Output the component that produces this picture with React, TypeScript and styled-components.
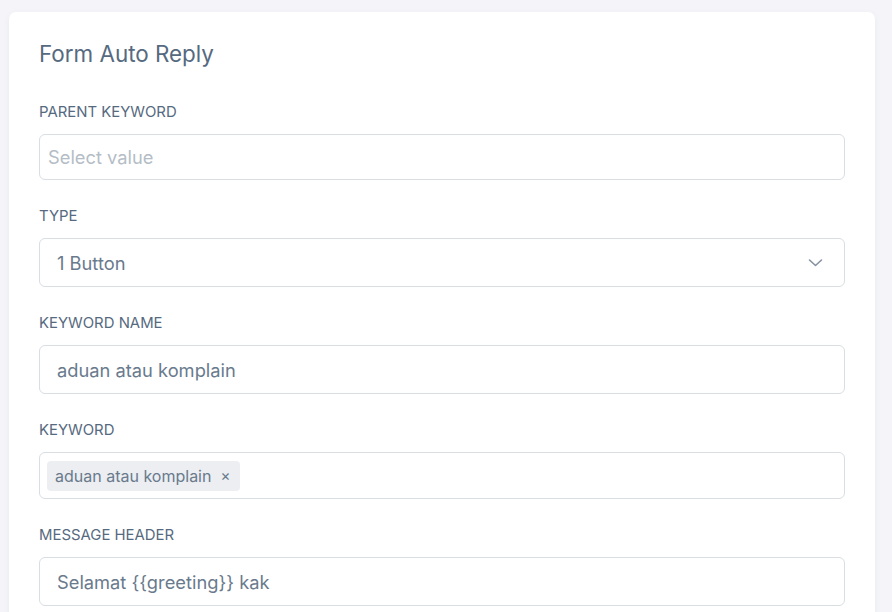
import * as React from 'react';
import styled, { createGlobalStyle } from 'styled-components';

const GlobalStyle = createGlobalStyle`
    html, body {
        margin: 0;
        padding: 0;
        background: #f5f5f9;
        font-family: Inter, "Noto Sans", "Liberation Sans", sans-serif;
        color: #566a7f;
    }
`;

const Page = styled.div`
    padding: 12px 17px 0 9px;
    height: 600px;
    overflow: hidden;
`;

const Card = styled.div`
    background: #fff;
    border-radius: 7px;
    box-shadow: 0 2px 6px rgba(67, 89, 113, 0.08);
    padding: 27px 30px 40px 30px;
    display: flex;
    flex-direction: column;
`;

const Title = styled.h5`
    margin: 0 0 33px 0;
    font-size: 22.4px;
    line-height: 30px;
    font-weight: 400;
    color: #566a7f;
`;

const Field = styled.div`
    display: flex;
    flex-direction: column;
    gap: 12px;
    margin-bottom: 26px;
`;

const Label = styled.label`
    font-size: 14.9px;
    line-height: 20px;
    font-weight: 400;
    text-transform: uppercase;
    color: #566a7f;
`;

const Box = styled.div<{ $h: number; $pad: number }>`
    height: ${p => p.$h}px;
    box-sizing: border-box;
    border: 1px solid #d9dee3;
    border-radius: 6px;
    padding: 0 21px 0 ${p => p.$pad}px;
    display: flex;
    align-items: center;
    justify-content: space-between;
    font-size: 18.3px;
    color: #697a8d;
`;

const Placeholder = styled.span`
    color: #b4bdc6;
`;

const Tag = styled.span`
    display: inline-flex;
    align-items: center;
    gap: 9px;
    height: 30px;
    padding: 0 10px 0 8px;
    background: #eceef1;
    border-radius: 4px;
    font-size: 16px;
    color: #697a8d;
`;

const Close = styled.span`
    font-size: 15px;
`;

const Chevron = () => (
    <svg width="15" height="14" viewBox="0 0 15 14" fill="none">
        <path d="M1.5 4 L7.5 9.5 L13.5 4" stroke="#8592a3" strokeWidth="1.6" strokeLinecap="round" strokeLinejoin="round" />
    </svg>
);

export default function App() {
    return (
        <>
            <GlobalStyle />
            <Page>
                <Card>
                    <Title>Form Auto Reply</Title>
                    <Field>
                        <Label>Parent Keyword</Label>
                        <Box $h={46} $pad={8}><Placeholder>Select value</Placeholder></Box>
                    </Field>
                    <Field>
                        <Label>Type</Label>
                        <Box $h={49} $pad={17}>
                            <span>1 Button</span>
                            <Chevron />
                        </Box>
                    </Field>
                    <Field>
                        <Label>Keyword Name</Label>
                        <Box $h={49} $pad={17}>aduan atau komplain</Box>
                    </Field>
                    <Field>
                        <Label>Keyword</Label>
                        <Box $h={47} $pad={7}>
                            <Tag>aduan atau komplain <Close>×</Close></Tag>
                        </Box>
                    </Field>
                    <Field>
                        <Label>Message Header</Label>
                        <Box $h={49} $pad={17}>Selamat {'{{greeting}}'} kak</Box>
                    </Field>
                </Card>
            </Page>
        </>
    );
}
